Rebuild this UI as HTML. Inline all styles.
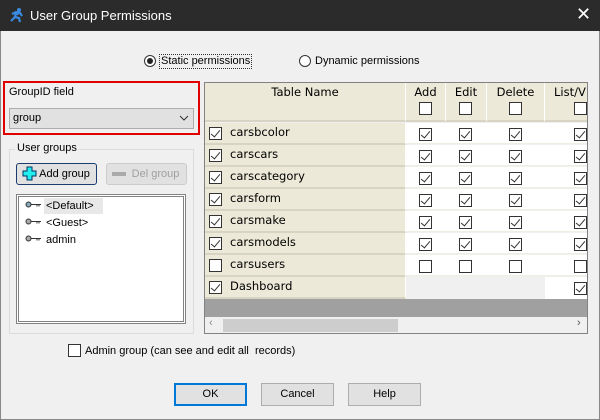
<!DOCTYPE html>
<html><head><style>
*{box-sizing:border-box;margin:0;padding:0}
body{width:600px;height:420px;background:#f0f0f0;font-family:"Liberation Sans",Tahoma,sans-serif;font-size:11px;color:#000;position:relative;overflow:hidden}
.a{position:absolute}
.cb{position:absolute;width:13px;height:13px;border:1px solid #333;background:#fff}
.ck::after{content:"";position:absolute;left:3px;top:0px;width:4px;height:8px;border:solid #333;border-width:0 1px 1px 0;transform:rotate(40deg)}
.hdr{background:#ece9d8;border-right:1px solid #fff;border-bottom:2px solid #d8d4c4}
.t{font-family:"DejaVu Sans",Verdana,sans-serif;font-size:11.5px}
.btn{position:absolute;border:1px solid #adadad;background:#e1e1e1;text-align:center;line-height:21px}
</style></head><body>
<div class="a" style="left:0;top:0;width:600px;height:31px;background:#2b2b2b"></div>
<svg class="a" style="left:9px;top:7px" width="16" height="16" viewBox="0 0 16 16"><circle cx="10" cy="3" r="2" fill="#3a8be0"/><path d="M3 7 L7 5 L11 6 L13 9 M7 5 L6 10 L2 14 M6 10 L10 11 L11 15 M9 6 L8 8" stroke="#3a8be0" stroke-width="2.2" fill="none"/></svg>
<div class="a" style="left:30px;top:8px;color:#fff;font-size:13px">User Group Permissions</div>
<div class="a" style="left:576px;top:4px;color:#fff;font-size:18px">✕</div>
<div class="a" style="left:0;top:31px;width:1px;height:389px;background:#888"></div>
<div class="a" style="left:599px;top:31px;width:1px;height:389px;background:#888"></div>
<div class="a" style="left:0;top:419px;width:600px;height:1px;background:#888"></div>

<div class="a" style="left:144px;top:55px;width:12px;height:12px;border:1px solid #333;border-radius:50%;background:#fff"><div style="margin:2px;width:6px;height:6px;border-radius:50%;background:#222"></div></div>
<div class="a" style="left:159px;top:54px;border:1px dotted #333;padding:0 1px;line-height:13px">Static permissions</div>
<div class="a" style="left:299px;top:55px;width:12px;height:12px;border:1px solid #333;border-radius:50%;background:#fff"></div>
<div class="a" style="left:315px;top:55px">Dynamic permissions</div>

<div class="a" style="left:3px;top:81px;width:197px;height:54px;border:2px solid #e00000"></div>
<div class="a" style="left:9px;top:86px">GroupID field</div>
<div class="a" style="left:9px;top:108px;width:185px;height:21px;border:1px solid #adadad;background:#e1e1e1;padding:3px 3px">group</div>
<svg class="a" style="left:179px;top:115px" width="10" height="6"><path d="M1 1 L5 5 L9 1" stroke="#333" fill="none"/></svg>

<div class="a" style="left:9px;top:149px;width:185px;height:185px;border:1px solid #dcdcdc"></div>
<div class="a" style="left:15px;top:142px;background:#f0f0f0;padding:0 2px">User groups</div>
<div class="btn" style="left:16px;top:163px;width:81px;height:22px;border-color:#1a3c6e;border-radius:3px;background:#e1e1e1;padding-left:16px">Add group</div>
<svg class="a" style="left:22px;top:166px" width="15" height="15"><path d="M5 1h5v4h4v5h-4v4h-5v-4h-4v-5h4z" fill="#2ee" stroke="#036" stroke-width="1"/></svg>
<div class="btn" style="left:106px;top:163px;width:81px;height:22px;border-color:#ccc;color:#a0a0a0;border-radius:3px;padding-left:18px">Del group</div>
<div class="a" style="left:112px;top:172px;width:14px;height:4px;background:#aaa"></div>
<div class="a" style="left:16px;top:194px;width:170px;height:130px;border:1px solid #828282;background:#fff"><div style="margin:1px;height:126px;border:1px solid #828282"></div></div>
<div class="a" style="left:44px;top:198px;width:59px;height:16px;background:#e8e8e8"></div>
<div class="a" style="left:46px;top:200px">&lt;Default&gt;</div>
<div class="a" style="left:46px;top:217px">&lt;Guest&gt;</div>
<div class="a" style="left:46px;top:234px">admin</div>
<svg class="a" style="left:25px;top:201px" width="18" height="50"><g fill="none" stroke="#333"><circle cx="3.5" cy="3.5" r="2.5" fill="#8ab"/><path d="M6 3.5h10M12 3.5v2M14 3.5v2"/><circle cx="3.5" cy="20.5" r="2.5" fill="#aaa"/><path d="M6 20.5h10M12 20.5v2M14 20.5v2"/><circle cx="3.5" cy="37.5" r="2.5" fill="#aaa"/><path d="M6 37.5h10M12 37.5v2M14 37.5v2"/></g></svg>

<div class="cb" style="left:68px;top:344px"></div>
<div class="a" style="left:85px;top:345px">Admin group (can see and edit all&nbsp; records)</div>

<div class="a" style="left:204px;top:82px;width:384px;height:252px;border:1px solid #828282;background:#f0f0f0;overflow:hidden">
 <div class="a t hdr" style="left:0;top:0;width:201px;height:39px;text-align:center;padding-top:2px">Table Name</div>
 <div class="a t hdr" style="left:201px;top:0;width:40px;height:39px;text-align:center;padding-top:2px">Add</div>
 <div class="a t hdr" style="left:241px;top:0;width:41px;height:39px;text-align:center;padding-top:2px">Edit</div>
 <div class="a t hdr" style="left:282px;top:0;width:58px;height:39px;text-align:center;padding-top:2px">Delete</div>
 <div class="a t hdr" style="left:340px;top:0;width:50px;height:39px;padding:2px 0 0 9px">List/V</div>
 <div class="cb" style="left:214px;top:19px"></div><div class="cb" style="left:254px;top:19px"></div><div class="cb" style="left:304px;top:19px"></div><div class="cb" style="left:369px;top:19px"></div>
 <div class="a" style="left:0;top:216px;width:384px;height:18px;background:#a0a0a0"></div>
 <div class="a" style="left:0;top:234px;width:384px;height:17px;background:#f0f0f0"></div>
 <div class="a" style="left:18px;top:236px;width:175px;height:13px;background:#cdcdcd"></div>
 <div class="a" style="left:4px;top:234px;color:#888;font-size:11px">&lsaquo;</div>
 <div class="a" style="left:372px;top:234px;color:#555;font-size:11px">&rsaquo;</div>
 <div id="rows"></div>
</div>
<script>
var n=["carsbcolor","carscars","carscategory","carsform","carsmake","carsmodels","carsusers","Dashboard"],h="";
n.forEach(function(s,i){var y=40+i*22,c=i==6?"":" ck";
h+='<div class="a hdr" style="left:0;top:'+y+'px;width:201px;height:22px;border-bottom:2px solid #d8d4c4"></div>';
h+='<div class="cb'+c+'" style="left:4px;top:'+(y+4)+'px"></div><div class="a t" style="left:25px;top:'+(y+2)+'px">'+s+'</div>';
if(i<7){h+='<div class="a" style="left:201px;top:'+y+'px;width:183px;height:21px;background:#fff;border-bottom:1px solid #f0eee4"></div>';
[214,254,304].forEach(function(x){h+='<div class="cb'+c+'" style="left:'+x+'px;top:'+(y+5)+'px"></div>'});}
else h+='<div class="a" style="left:340px;top:'+y+'px;width:44px;height:22px;background:#fff"></div>';
h+='<div class="cb'+c+'" style="left:369px;top:'+(y+5)+'px"></div>';});
document.getElementById("rows").outerHTML=h;
</script>

<div class="btn" style="left:174px;top:383px;width:73px;height:23px;border:2px solid #0078d7;line-height:19px">OK</div>
<div class="btn" style="left:261px;top:383px;width:73px;height:23px">Cancel</div>
<div class="btn" style="left:348px;top:383px;width:73px;height:23px">Help</div>
</body></html>
